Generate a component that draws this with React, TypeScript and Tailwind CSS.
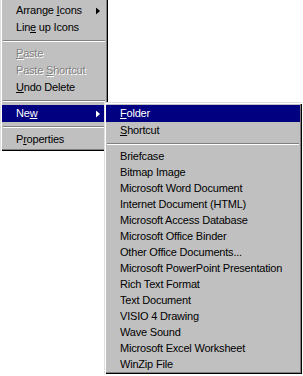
import React from "react";

type Item =
  | { kind: "sep"; h?: string }
  | {
      kind: "item";
      pre: string;
      key: string;
      post: string;
      disabled?: boolean;
      active?: boolean;
      sub?: boolean;
      h?: string;
    };

const it = (pre: string, key: string, post: string, extra: Partial<Item> = {}): Item =>
  ({ kind: "item", pre, key, post, ...extra } as Item);

const mainMenu: Item[] = [
  it("Arrange ", "I", "cons", { sub: true }),
  it("Lin", "e", " up Icons"),
  { kind: "sep" },
  it("", "P", "aste", { disabled: true }),
  it("Paste ", "S", "hortcut", { disabled: true }),
  it("", "U", "ndo Delete"),
  { kind: "sep" },
  it("Ne", "w", "", { active: true, sub: true }),
  { kind: "sep" },
  it("P", "r", "operties"),
];

const newMenu: Item[] = [
  it("", "F", "older", { active: true }),
  it("", "S", "hortcut"),
  { kind: "sep", h: "h-[9px]" },
  ...[
    "Briefcase",
    "Bitmap Image",
    "Microsoft Word Document",
    "Internet Document (HTML)",
    "Microsoft Access Database",
    "Microsoft Office Binder",
    "Other Office Documents...",
    "Microsoft PowerPoint Presentation",
    "Rich Text Format",
    "Text Document",
    "VISIO 4 Drawing",
    "Wave Sound",
    "Microsoft Excel Worksheet",
    "WinZip File",
  ].map((t) => it(t, "", "", { h: "h-[16px]" })),
];

function Arrow({ white }: { white?: boolean }) {
  return (
    <svg width="4" height="7" viewBox="0 0 4 7" className="absolute right-[6px] top-1/2 -translate-y-1/2">
      <path d="M0 0 L4 3.5 L0 7 Z" fill={white ? "#ffffff" : "#000000"} />
    </svg>
  );
}

function MenuRows({ items }: { items: Item[] }) {
  return (
    <>
      {items.map((m, i) => {
        if (m.kind === "sep") {
          return (
            <div key={i} className={`${m.h ?? "h-[9px]"} flex flex-col justify-center px-[1px]`}>
              <div className="h-px bg-[#808080]" />
              <div className="h-px bg-white" />
            </div>
          );
        }
        const color = m.active
          ? "bg-[#000080] text-white"
          : m.disabled
          ? "text-[#808080] [text-shadow:1px_1px_0_#ffffff]"
          : "text-black";
        return (
          <div
            key={i}
            className={`relative ${m.h ?? "h-[17px]"} flex items-center pl-[14px] pr-5 whitespace-nowrap ${color}`}
          >
            <span>
              {m.pre}
              {m.key && <span className="underline decoration-1 underline-offset-[1px]">{m.key}</span>}
              {m.post}
            </span>
            {m.sub && <Arrow white={m.active} />}
          </div>
        );
      })}
    </>
  );
}

export default function App() {
  return (
    <div
      className="relative w-[303px] h-[376px] overflow-hidden bg-white text-[11px] leading-none tracking-[-0.2px]"
      style={{ fontFamily: '"Liberation Sans", Arial, sans-serif' }}
    >
      {/* desktop context menu, top is cut off */}
      <div className="w-[108px] bg-[#c0c0c0] pt-[2px] pb-[3px] pl-[2px] pr-[2px] shadow-[inset_1px_0_0_#dfdfdf,inset_2px_0_0_#ffffff,inset_-1px_0_0_#000000,inset_-2px_0_0_#808080,inset_0_-1px_0_#000000,inset_0_-2px_0_#808080]">
        <MenuRows items={mainMenu} />
      </div>

      {/* New submenu */}
      <div className="absolute left-[104px] top-[102px] w-[198px] bg-[#c0c0c0] p-[2px] pt-[3px] shadow-[inset_1px_1px_0_#dfdfdf,inset_2px_2px_0_#ffffff,inset_-1px_-1px_0_#000000,inset_-2px_-2px_0_#808080]">
        <MenuRows items={newMenu} />
      </div>
    </div>
  );
}
